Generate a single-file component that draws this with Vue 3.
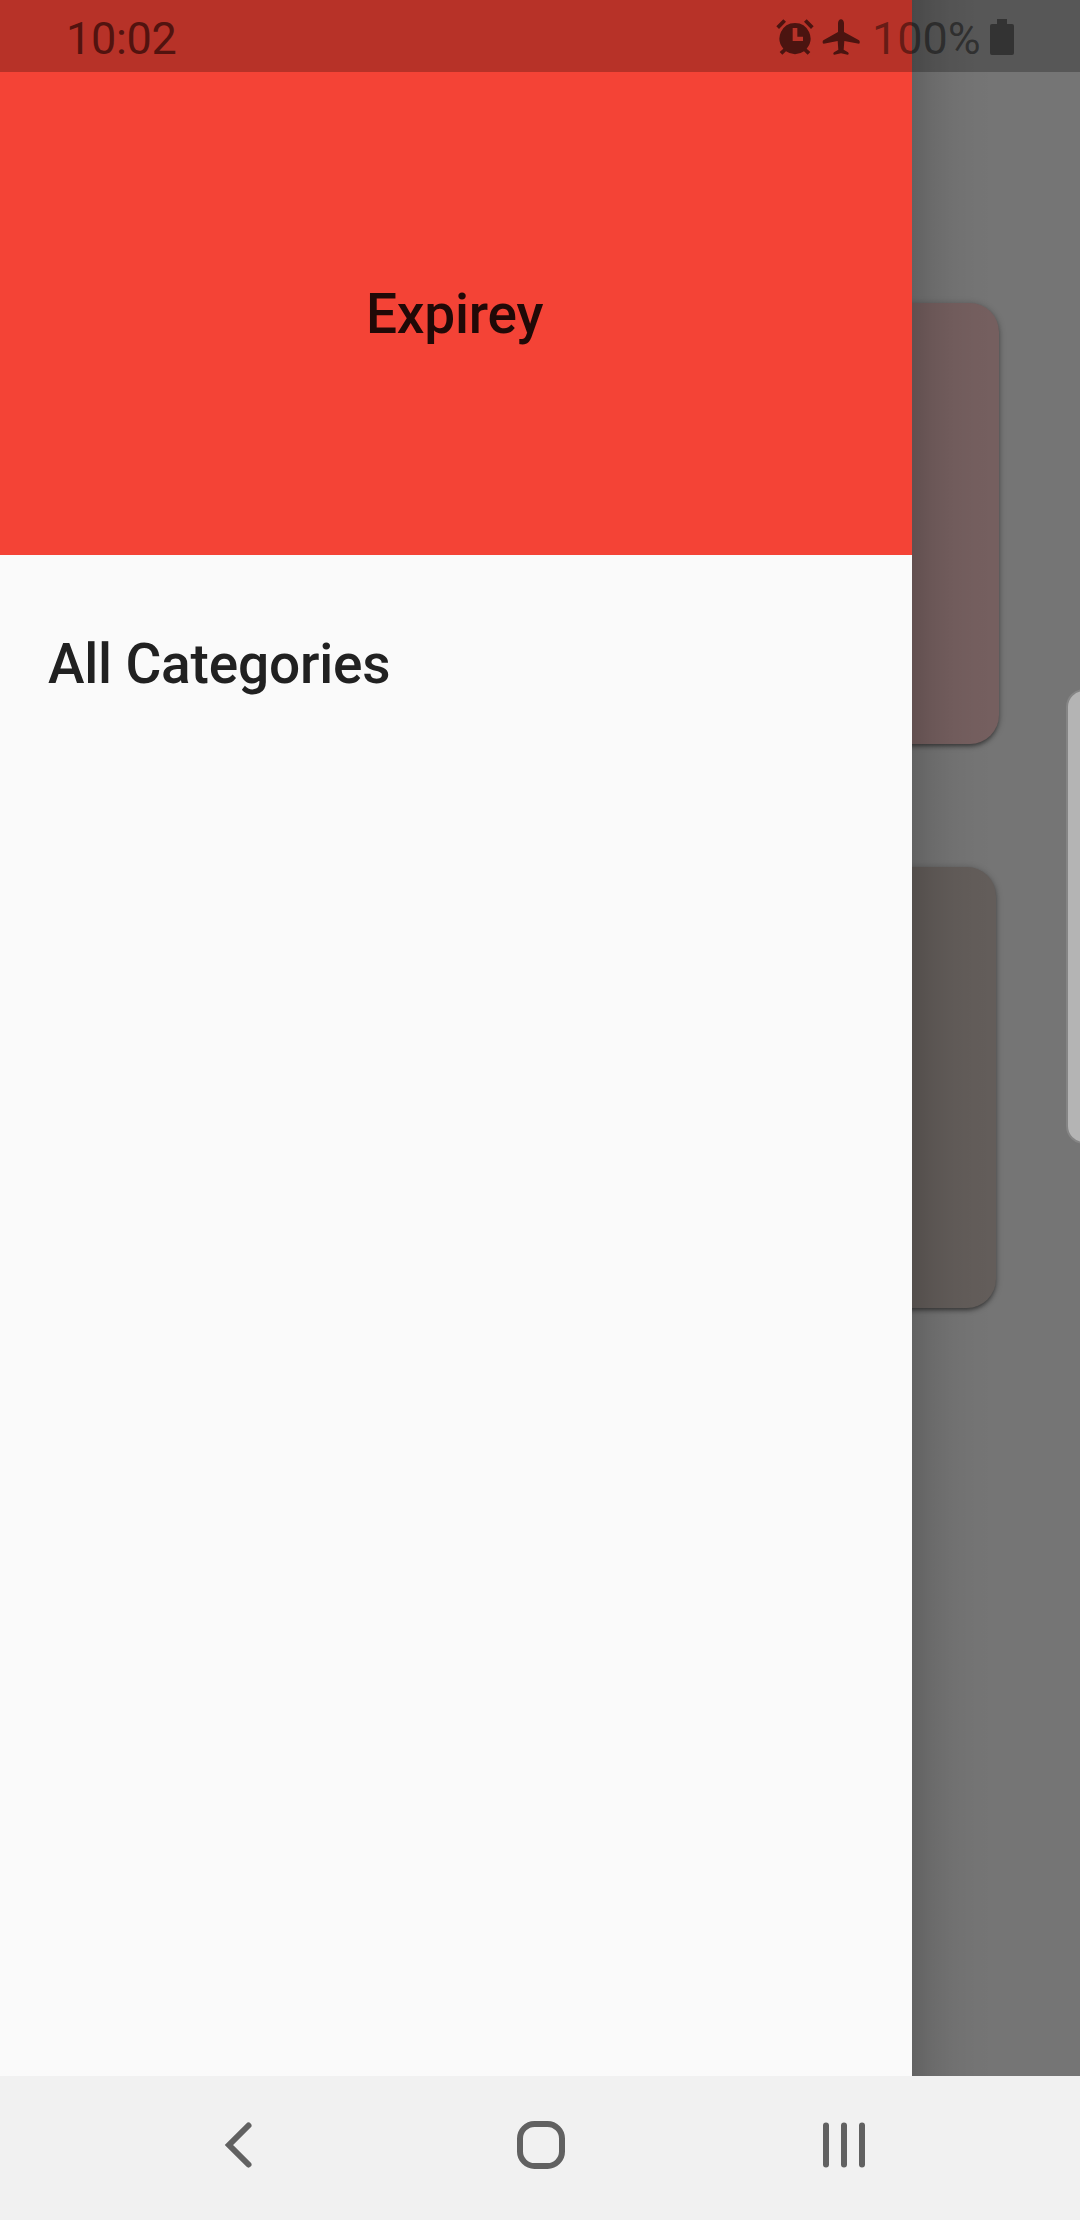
<script setup>
const time = '10:02'
const battery = '100%'
const appName = 'Expirey'
const menu = ['All Categories']
const cards = ['rose', 'taupe']
</script>

<template>
  <div class="screen">
    <main class="page">
      <div v-for="c in cards" :key="c" class="card" :class="c"></div>
    </main>

    <div class="edge-panel"></div>

    <aside class="drawer">
      <header class="drawer-header"><h1>{{ appName }}</h1></header>
      <nav class="menu">
        <a v-for="item in menu" :key="item">{{ item }}</a>
      </nav>
    </aside>

    <div class="status">
      <span class="time">{{ time }}</span>
      <div class="indicators">
        <svg class="alarm" viewBox="45 54 120 114">
          <path fill-rule="evenodd" d="M105 69a46.500 46.500 0 0 1 35 77l11 10-8 8-11-10a46.500 46.500 0 0 1-54 0l-11 10-8-8 11-10a46.500 46.500 0 0 1 35-77ZM98 84v39h31v-13h-17v-26Z" />
          <path d="M49 79 70 58l8 7-21 22ZM161 79 140 58l-8 7 21 22Z" />
        </svg>
        <svg class="plane" viewBox="186 54 114 114">
          <path d="M243 58c5 0 9 5 9 12v26l45 25c3 2 3 10 0 10l-44-8-2 26 13 8c3 2 3 8-1 7l-20-4-20 4c-4 1-4-5-1-7l13-8-2-26-42 8c-4 0-4-8-1-10l44-25v-26c0-7 4-12 9-12Z" />
        </svg>
        <span class="percent">{{ battery }}</span>
        <svg class="battery" viewBox="0 0 24 36">
          <path d="M7 0h10v5h5q2 0 2 2v27q0 2-2 2H2q-2 0-2-2V7q0-2 2-2h5Z" />
        </svg>
      </div>
    </div>

    <footer class="navbar">
      <svg viewBox="0 0 1080 144">
        <path d="M248.500 49.500 229 69l19.500 19.500" />
        <rect x="520" y="48" width="42" height="42" rx="14.500" />
        <path d="M826 49.500v39M844 49.500v39M862 49.500v39" />
      </svg>
    </footer>
  </div>
</template>

<style>
body {
  margin: 0;
}
</style>

<style scoped>
.screen {
  position: relative;
  display: flex;
  flex-direction: column;
  width: 1080px;
  height: 2220px;
  overflow: hidden;
  font-family: Roboto, sans-serif;
}
.page {
  flex: 1;
  display: flex;
  flex-direction: column;
  gap: 123px;
  box-sizing: border-box;
  padding-top: 303px;
  background: #757575;
}
.card {
  width: 420px;
  height: 441px;
  margin-left: 579px;
  border-radius: 29px;
  box-shadow: 0 3px 4px -1px rgba(0, 0, 0, 0.4), 0 1px 7px rgba(0, 0, 0, 0.28);
}
.rose {
  background: #755f5f;
}
.taupe {
  margin-left: 576px;
  background: #635d5a;
}
.edge-panel {
  position: absolute;
  top: 689px;
  right: -22px;
  box-sizing: border-box;
  width: 36px;
  height: 455px;
  border: 2px solid #858585;
  border-radius: 18px;
  background: #b4b4b4;
}
.drawer {
  position: absolute;
  top: 0;
  left: 0;
  width: 912px;
  height: 2076px;
  background: #fafafa;
}
.drawer::after {
  content: '';
  position: absolute;
  top: 0;
  left: 100%;
  width: 84px;
  height: 100%;
  background: linear-gradient(90deg, rgba(0, 0, 0, 0.165), rgba(0, 0, 0, 0.085) 25%, rgba(0, 0, 0, 0.035) 50%, rgba(0, 0, 0, 0.01) 75%, transparent);
}
.drawer-header {
  display: flex;
  justify-content: center;
  box-sizing: border-box;
  height: 555px;
  padding: 281px 3px 0 0;
  background: #f44336;
}
h1,
.menu a {
  margin: 0;
  font-size: 55px;
  font-weight: 500;
  line-height: 67px;
  letter-spacing: -0.2px;
  color: #212121;
}
h1 {
  color: #200907;
}
.menu {
  display: flex;
  flex-direction: column;
  padding: 76px 48px;
}
.status {
  position: absolute;
  top: 0;
  left: 0;
  display: flex;
  justify-content: space-between;
  align-items: flex-start;
  box-sizing: border-box;
  width: 1080px;
  height: 72px;
  padding: 0 66px 0 66px;
  background: rgba(0, 0, 0, 0.25);
  font-size: 45px;
  line-height: 78px;
}
.time {
  letter-spacing: -0.3px;
  color: #52130f;
}
.indicators {
  display: flex;
  align-items: flex-start;
}
.alarm,
.plane {
  margin-top: 18px;
  fill: #4b1410;
}
.alarm {
  width: 40px;
  height: 38px;
}
.plane {
  width: 38px;
  height: 38px;
  margin-left: 7px;
}
.percent {
  width: 106px;
  margin-left: 12px;
  color: rgba(0, 0, 0, 0.45);
}
.battery {
  width: 24px;
  height: 36px;
  margin: 19px 0 0 12px;
  fill: #333;
}
.navbar {
  position: relative;
  height: 144px;
  background: #f1f1f1;
}
.navbar svg {
  display: block;
  width: 1080px;
  height: 144px;
  fill: none;
  stroke: #616161;
  stroke-width: 6;
  stroke-linecap: round;
}
</style>
